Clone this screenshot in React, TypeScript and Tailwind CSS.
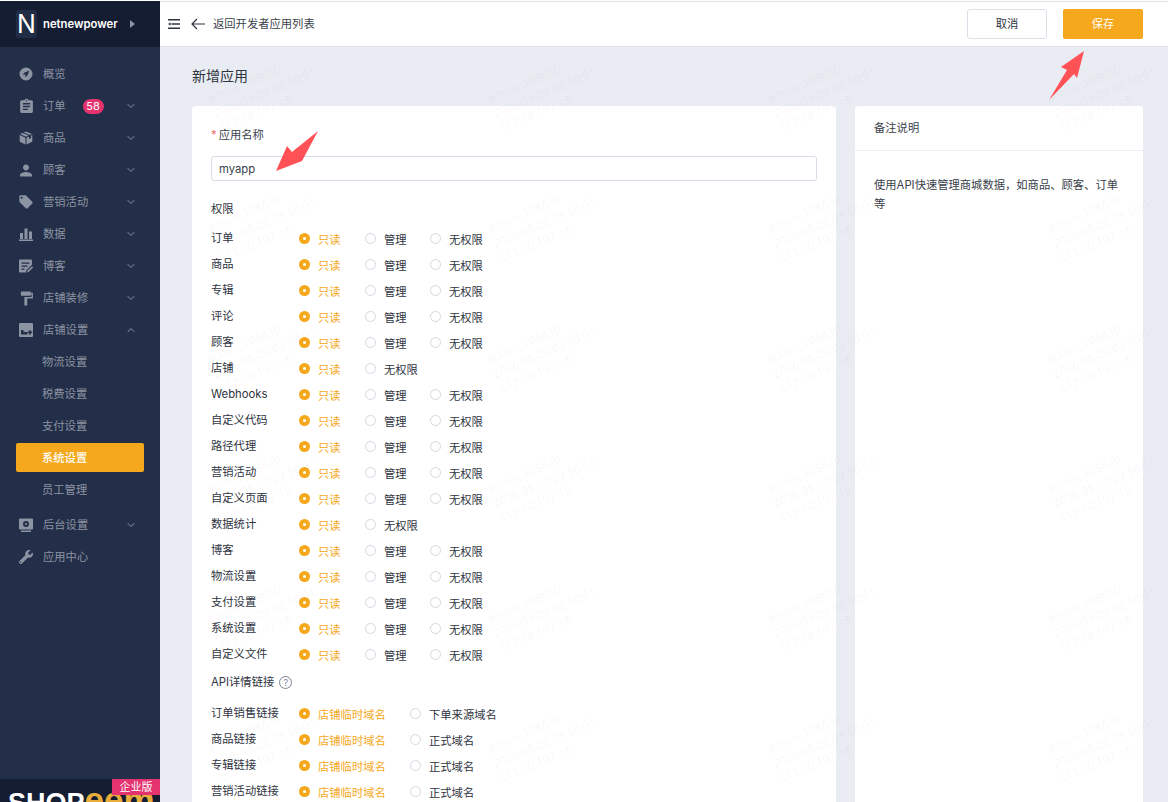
import React from "react";
import { MdAssignment, MdPerson, MdLocalOffer, MdFormatPaint } from "react-icons/md";
import { FaWrench } from "react-icons/fa";
import { ChevronDown, ChevronUp } from "lucide-react";

const ic = "w-[16px] h-[16px] fill-[#8c93a3]";
const Compass = () => (
  <svg viewBox="0 0 16 16" className={ic}><path fillRule="evenodd" d="M8 1.5a6.5 6.5 0 1 1 0 13a6.5 6.5 0 0 1 0-13zM11.3 4.7 6.6 6.6 4.7 8.7 7.4 8.6 7.3 11.3 9.4 9.4z" /></svg>
);
const Cube = () => (
  <svg viewBox="0 0 16 16" className={ic}><path d="M8 1.4 14 4 11.8 5 5.8 2.4zM4.6 3 10.6 5.6 8 6.8 2 4zM1.7 5 7.5 7.7V14.6L1.7 11.8zM14.3 5V11.8L8.5 14.6V7.7L11 6.5V9L13 8V5.7z" /></svg>
);
const Bars = () => (
  <svg viewBox="0 0 16 16" className={ic}><path d="M2 7h3v6H2zM6.5 2.5h3V13h-3zM11 5.5h3V13h-3zM1 13.6h14V15H1z" /></svg>
);
const Blog = () => (
  <svg viewBox="0 0 16 16" className={ic}><path d="M2 1.5h11a1 1 0 0 1 1 1v4.2l-5.6 5.6-.5 2.2H2a1 1 0 0 1-1-1V2.5a1 1 0 0 1 1-1zM3.5 4.5v1.3h8V4.5zM3.5 7.5v1.3h6V7.5zM3.5 10.5v1.3h3v-1.3zM14 8.2l1.2 1.2-4.6 4.6-1.6.4.4-1.6z" /></svg>
);
const Shop = () => (
  <svg viewBox="0 0 16 16" className={ic}><path fillRule="evenodd" d="M2 1h12a1 1 0 0 1 1 1v12a1 1 0 0 1-1 1H2a1 1 0 0 1-1-1V2a1 1 0 0 1 1-1zM3 8v4.5h6.5V10h-4V8zM11 8.5h2v1h1.2v1.5H13v1.5h-2V11H9.8V9.5H11z" /></svg>
);
const Monitor = () => (
  <svg viewBox="0 0 16 16" className={ic}><path fillRule="evenodd" d="M2 1.5h12a1 1 0 0 1 1 1v9a1 1 0 0 1-1 1H2a1 1 0 0 1-1-1v-9a1 1 0 0 1 1-1zM8 4a3 3 0 1 0 0 6a3 3 0 0 0 0-6zM8 6a1 1 0 1 1 0 2a1 1 0 0 1 0-2zM3 13.5h10V15H3z" /></svg>
);

const nav: { label: string; icon: React.ReactNode; badge?: string; caret?: "down" | "up" }[] = [
  { label: "概览", icon: <Compass /> },
  { label: "订单", icon: <MdAssignment className="w-[17px] h-[17px] text-[#8c93a3]" />, badge: "58", caret: "down" },
  { label: "商品", icon: <Cube />, caret: "down" },
  { label: "顾客", icon: <MdPerson className="w-[19px] h-[19px] text-[#8c93a3]" />, caret: "down" },
  { label: "营销活动", icon: <MdLocalOffer className="w-[16px] h-[16px] text-[#8c93a3]" />, caret: "down" },
  { label: "数据", icon: <Bars />, caret: "down" },
  { label: "博客", icon: <Blog />, caret: "down" },
  { label: "店铺装修", icon: <MdFormatPaint className="w-[17px] h-[17px] text-[#8c93a3]" />, caret: "down" },
  { label: "店铺设置", icon: <Shop />, caret: "up" },
];

const subs = ["物流设置", "税费设置", "支付设置", "系统设置", "员工管理"];

const perms: [string, boolean][] = [
  ["订单", true], ["商品", true], ["专辑", true], ["评论", true], ["顾客", true], ["店铺", false],
  ["Webhooks", true], ["自定义代码", true], ["路径代理", true], ["营销活动", true], ["自定义页面", true],
  ["数据统计", false], ["博客", true], ["物流设置", true], ["支付设置", true], ["系统设置", true], ["自定义文件", true],
];

const links: [string, string][] = [
  ["订单销售链接", "下单来源域名"], ["商品链接", "正式域名"], ["专辑链接", "正式域名"], ["营销活动链接", "正式域名"],
];

function NavRow({ label, icon, badge, caret }: (typeof nav)[number]) {
  return (
    <div className="h-[32px] flex items-center pl-[17px] pr-[23px] text-[11.3px] text-[#8c93a3]">
      <span className="w-[18px] h-[18px] flex items-center justify-center shrink-0">{icon}</span>
      <span className="ml-[8px]">{label}</span>
      {badge && (
        <span className="ml-[17px] w-[21px] h-[15px] rounded-full bg-[#e4336f] text-white text-[11px] leading-[15px] text-center">{badge}</span>
      )}
      {caret === "down" && <ChevronDown className="ml-auto w-[12px] h-[12px] text-[#8c93a3]" />}
      {caret === "up" && <ChevronUp className="ml-auto w-[12px] h-[12px] text-[#8c93a3]" />}
    </div>
  );
}

function Radio({ on, label, width }: { on?: boolean; label: string; width: string }) {
  return (
    <span className={`flex items-center ${width}`}>
      <span className={on
        ? "w-[11px] h-[11px] rounded-full bg-[#f5a81c] flex items-center justify-center shrink-0"
        : "w-[11px] h-[11px] rounded-full border border-[#d5d8e2] bg-white shrink-0"}>
        {on && <span className="w-[3px] h-[3px] rounded-full bg-white" />}
      </span>
      <span className={`ml-[8px] translate-y-[2px] whitespace-nowrap ${on ? "text-[#f5a81c]" : "text-[#2f3441]"}`}>{label}</span>
    </span>
  );
}

function Row({ label, children }: { label: string; children: React.ReactNode }) {
  return (
    <div className="h-[26px] flex items-center text-[11.3px]">
      <span className="w-[88px] text-[#2f3441]">{label}</span>
      {children}
    </div>
  );
}

export default function App() {
  return (
    <div
      className="relative w-[1168px] h-[802px] overflow-hidden flex flex-col bg-[#e9ecf2]"
      style={{ fontFamily: '"Inter","Noto Sans CJK SC",sans-serif' }}
    >
      <div className="h-[1px] bg-white shrink-0" />
      <div className="flex flex-1 min-h-0">
        <aside className="w-[160px] shrink-0 bg-[#232f48] flex flex-col relative">
          <div className="h-[46px] shrink-0 bg-[#151d33] flex items-center pl-[16px]">
            <span className="w-[21px] h-[28px] rounded-[3px] bg-[#212c45] text-white text-[25px] leading-[28px] text-center font-normal">N</span>
            <span className="ml-[6px] text-white text-[11.3px] font-semibold">netnewpower</span>
            <span className="ml-[12px] w-0 h-0 border-y-[4px] border-y-transparent border-l-[5px] border-l-[#8c93a3]" />
          </div>
          <div className="pt-[11px] flex-1">
            {nav.map((n) => <NavRow key={n.label} {...n} />)}
            {subs.map((s) =>
              s === "系统设置" ? (
                <div key={s} className="mx-[16px] h-[29px] mt-[0.5px] mb-[2.5px] bg-[#f5a81c] rounded-[2px] flex items-center pl-[26px] pt-[2px] text-[11.3px] text-white font-medium">{s}</div>
              ) : (
                <div key={s} className="h-[32px] flex items-center pl-[42px] text-[11.3px] text-[#8c93a3]">{s}</div>
              )
            )}
            <div className="mt-[3px]">
              <NavRow label="后台设置" icon={<Monitor />} caret="down" />
              <NavRow label="应用中心" icon={<FaWrench className="w-[14px] h-[14px] text-[#8c93a3]" />} />
            </div>
          </div>
          <div className="h-[23px] shrink-0 bg-[#151d33] overflow-hidden relative pl-[8px]">
            <span className="flex items-baseline leading-[34px] mt-[4px] font-bold text-white whitespace-nowrap" style={{ fontFamily: '"Liberation Sans",sans-serif' }}>
              <span className="text-[27px] leading-[34px]">SHOP</span><span className="text-[35px] leading-[34px] text-[#e8ac3a]">eem</span>
            </span>
            <span className="absolute right-0 top-0 w-[48px] h-[16px] bg-[#e4336f] text-white text-[11px] leading-[16px] text-center">企业版</span>
          </div>
        </aside>

        <main className="flex-1 min-w-0 flex flex-col relative">
          <header className="h-[46px] shrink-0 bg-white border-y border-[#dfe1e6] flex items-center pl-[8px] pr-[25px]">
            <svg viewBox="0 0 12 10" className="w-[12px] h-[10px] fill-[#2f3441]"><path d="M0 0h12v1.6H0zM3.5 4.2H12v1.6H3.5zM0 8.4h12V10H0zM0 5l2.6-1.8v3.6z" /></svg>
            <svg viewBox="0 0 14 12" className="ml-[11px] w-[14px] h-[12px] fill-none stroke-[#2f3441] stroke-[1.2]"><path d="M14 6H1M6 1 1 6l5 5" /></svg>
            <span className="ml-[8px] text-[11.3px] text-[#3a3f4b]">返回开发者应用列表</span>
            <button className="ml-auto w-[80px] h-[30px] rounded-[3px] border border-[#dcdfe8] bg-white text-[11.3px] text-[#2f3441]">取消</button>
            <button className="ml-[16px] w-[80px] h-[30px] rounded-[2px] bg-[#f5a81c] text-[11.3px] text-white">保存</button>
          </header>

          <div className="flex-1 min-h-0 overflow-hidden pl-[32px] pr-[25px]">
            <h1 className="mt-[19px] h-[20px] leading-[20px] text-[14px] font-normal text-[#2f3441]">新增应用</h1>
            <div className="mt-[20px] flex gap-[19px] items-start">
              <section className="w-[644px] h-[720px] shrink-0 bg-white rounded-t-[4px] px-[19px] pt-[21px]">
                <div className="text-[11.3px] leading-[16px] text-[#3a3f4b]"><span className="text-[#f56c6c] mr-[2px]">*</span>应用名称</div>
                <div className="mt-[13px] h-[25px] rounded-[3px] border border-[#d9dce6] flex items-center pl-[7px] pt-[2px] text-[11.3px] text-[#3a3f4b]">myapp</div>
                <div className="mt-[20px] h-[16px] leading-[16px] text-[11.3px] text-[#2f3441]">权限</div>
                <div className="mt-[8px]">
                  {perms.map(([label, manage]) => (
                    <Row key={label} label={label}>
                      <Radio on label="只读" width="w-[66px]" />
                      {manage && <Radio label="管理" width="w-[65px]" />}
                      <Radio label="无权限" width="w-[70px]" />
                    </Row>
                  ))}
                </div>
                <div className="mt-[5px] h-[20px] flex items-center text-[11.3px] text-[#2f3441]">
                  API详情链接
                  <span className="ml-[5px] w-[13px] h-[13px] rounded-full border border-[#7d8494] text-[#7d8494] text-[9px] leading-[12px] text-center">?</span>
                </div>
                <div className="mt-[8px]">
                  {links.map(([label, other]) => (
                    <Row key={label} label={label}>
                      <Radio on label="店铺临时域名" width="w-[111px]" />
                      <Radio label={other} width="w-[100px]" />
                    </Row>
                  ))}
                </div>
              </section>
              <section className="flex-1 h-[720px] bg-white rounded-t-[4px]">
                <div className="h-[45px] border-b border-[#ebedf2] flex items-center pl-[19px] text-[11.3px] text-[#3a3f4b]">备注说明</div>
                <p className="mt-[25px] px-[19px] text-[11.3px] leading-[18.5px] text-[#3a3f4b]">使用API快速管理商城数据，如商品、顾客、订单等</p>
              </section>
            </div>
          </div>

          {/* watermark */}
          <div className="absolute inset-0 pointer-events-none overflow-hidden grid grid-cols-[repeat(4,280px)] auto-rows-[130px] pl-[49px] pt-[40px]">
            {Array.from({ length: 28 }).map((_, i) => (
              <div key={i} className="w-[120px] h-[100px] flex flex-col justify-center text-[12px] leading-[16px] text-black/[0.045] whitespace-nowrap -rotate-[23deg]" style={{ fontFamily: 'Roboto,sans-serif' }}>
                <span>admin_108830</span>
                <span>2026-08-20 03:50:01</span>
                <span>112.10.197.15</span>
              </div>
            ))}
          </div>
        </main>
      </div>

      {/* annotation arrows */}
      <svg viewBox="0 0 1168 802" className="absolute left-0 top-0 w-[1168px] h-[802px] pointer-events-none fill-[#ff5257]">
        <polygon points="276,171 287,146 292,152 318,131 302,161" />
        <polygon points="1084,51 1061,67 1067,70 1049,100 1074,74 1077,78" />
      </svg>
    </div>
  );
}
